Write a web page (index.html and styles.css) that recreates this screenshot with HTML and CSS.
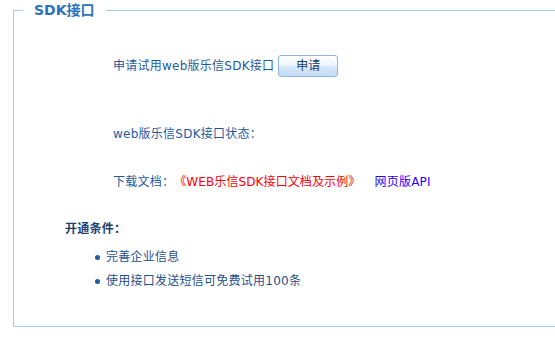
FILE: index.html
```html
<!DOCTYPE html>
<html lang="zh-CN">
<head>
<meta charset="utf-8">
<title>SDK接口</title>
<link rel="stylesheet" href="styles.css">
</head>
<body>
<fieldset class="box">
  <legend class="box-title">SDK接口</legend>
  <div class="row row-apply">
    <span class="txt">申请试用web版乐信SDK接口</span>
    <button class="btn" type="button">申请</button>
  </div>
  <div class="row row-status">
    <span class="txt">web版乐信SDK接口状态：</span>
  </div>
  <div class="row row-doc">
    <span class="txt">下载文档：</span><a class="doc-link" href="#">《WEB乐信SDK接口文档及示例》</a><a class="api-link" href="#">网页版API</a>
  </div>
  <div class="cond-title">开通条件：</div>
  <ul class="cond-list">
    <li class="cond-item">完善企业信息</li>
    <li class="cond-item">使用接口发送短信可免费试用100条</li>
  </ul>
</fieldset>
</body>
</html>
```

FILE: styles.css
```css
html, body {
  margin: 0;
  padding: 0;
  background: #ffffff;
  overflow: hidden;
}

body {
  width: 555px;
  height: 346px;
  font-family: "DejaVu Sans", "Noto Sans CJK SC", sans-serif;
  font-size: 12px;
  letter-spacing: 0.25px;
  color: #1f5a9c;
}

.box {
  margin: 0 0 0 13px;
  padding: 0 0 33px 0;
  width: 560px;
  border: 1px solid #a9cbe9;
  box-sizing: border-box;
  min-width: 0;
}

.box-title {
  margin-left: 9px;
  padding: 0 11px;
  font-size: 14px;
  line-height: 20px;
  font-weight: bold;
  letter-spacing: 0;
  color: #2b72ba;
}

.row {
  display: flex;
  align-items: center;
  padding-left: 99px;
  height: 22px;
  line-height: 22px;
}

.row-apply {
  margin-top: 35px;
}

.row-status {
  margin-top: 46px;
}

.row-doc {
  margin-top: 26px;
}

.txt {
  color: #1f5a9c;
}

.btn {
  margin-left: 4px;
  width: 60px;
  height: 22px;
  padding: 0;
  border: 1px solid #8fb4e0;
  border-radius: 3px;
  background: linear-gradient(#ffffff 0%, #eef5fd 45%, #d6e7fa 55%, #c4dbf5 100%);
  font-family: "DejaVu Sans", "Noto Sans CJK SC", sans-serif;
  font-size: 12px;
  color: #183a66;
  line-height: 20px;
}

.doc-link {
  letter-spacing: 0.1px;
  color: #ff0000;
  text-decoration: none;
}

.api-link {
  margin-left: 14px;
  color: #2a00ff;
  text-decoration: none;
}

.cond-title {
  margin-top: 25px;
  padding-left: 51px;
  height: 22px;
  line-height: 22px;
  font-weight: bold;
  color: #1c3f6e;
}

.cond-list {
  list-style: none;
  margin: 5px 0 0 0;
  padding: 0 0 0 81px;
}

.cond-item {
  display: flex;
  align-items: center;
  height: 24px;
  line-height: 24px;
  color: #1f4f8a;
}

.cond-item::before {
  content: "";
  width: 5px;
  height: 5px;
  border-radius: 50%;
  background: #1f5a9c;
  margin-right: 6px;
}
```
